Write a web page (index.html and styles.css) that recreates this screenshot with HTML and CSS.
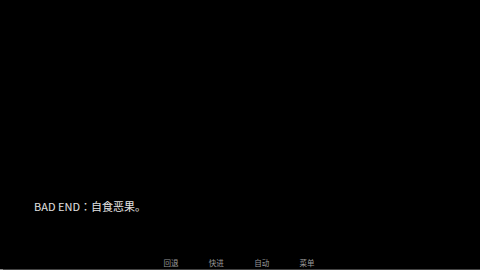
FILE: index.html
```html
<!DOCTYPE html>
<html>
<head>
<meta charset="utf-8">
<title>BAD END</title>
<link rel="stylesheet" href="styles.css">
</head>
<body>
<div class="screen">
  <div class="stage"></div>
  <div class="dialog">
    <p class="line">BAD END：自食恶果。</p>
  </div>
  <nav class="menu">
    <span class="item">回退</span>
    <span class="item">快进</span>
    <span class="item">自动</span>
    <span class="item">菜单</span>
  </nav>
  <div class="bar"><div class="bar-thumb"></div></div>
</div>
</body>
</html>
```

FILE: styles.css
```css
html, body {
  margin: 0;
  padding: 0;
  background: #000;
}

.screen {
  width: 480px;
  height: 270px;
  display: flex;
  flex-direction: column;
  background: #000;
  font-family: "Noto Sans CJK JP", "Noto Sans", sans-serif;
  overflow: hidden;
}

.stage {
  flex: 1;
}

.dialog {
  height: 60px;
  padding: 0 34px;
}

.line {
  margin: 0;
  font-size: 11px;
  line-height: 17px;
  color: #e2e2e2;
}

.menu {
  height: 10px;
  padding-bottom: 1px;
  display: flex;
  justify-content: center;
  gap: 30.4px;
  padding-right: 2px;
}

.item {
  font-size: 7.5px;
  line-height: 10px;
  color: #9a9a9a;
}

.bar {
  height: 1px;
  display: flex;
  background: #2a2a2a;
}

.bar-thumb {
  width: 478px;
  background: #454545;
  border-left: 3px solid #8a8a8a;
}
```
